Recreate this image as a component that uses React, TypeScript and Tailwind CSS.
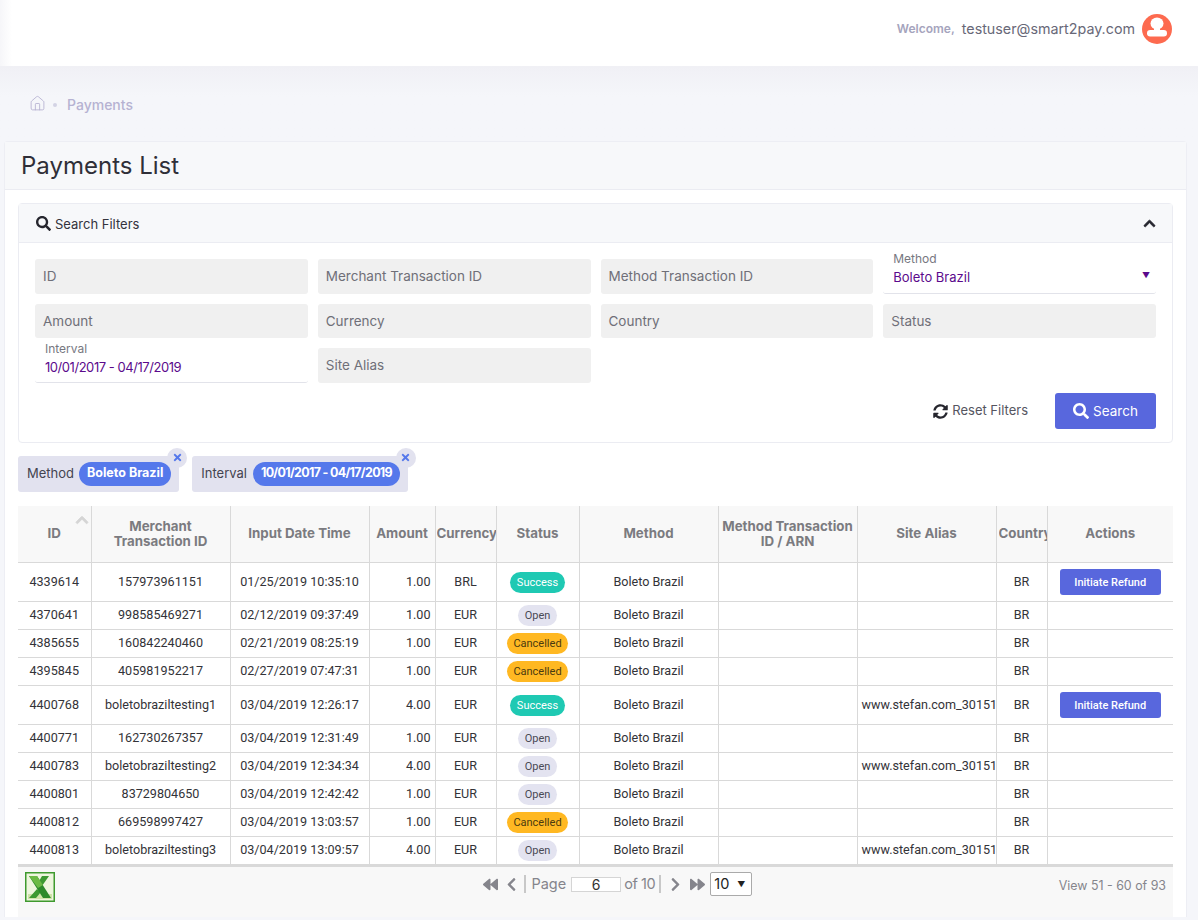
import React from "react";
import { Home } from "lucide-react";
import {
  FaBackward,
  FaChevronLeft,
  FaChevronRight,
  FaChevronUp,
  FaForward,
  FaSearch,
  FaSyncAlt,
  FaTimes,
} from "react-icons/fa";

type Status = "Success" | "Open" | "Cancelled";

interface Payment {
  id: string;
  merchantId: string;
  date: string;
  amount: string;
  currency: string;
  status: Status;
  alias?: boolean;
}

const payments: Payment[] = [
  { id: "4339614", merchantId: "157973961151", date: "01/25/2019 10:35:10", amount: "1.00", currency: "BRL", status: "Success" },
  { id: "4370641", merchantId: "998585469271", date: "02/12/2019 09:37:49", amount: "1.00", currency: "EUR", status: "Open" },
  { id: "4385655", merchantId: "160842240460", date: "02/21/2019 08:25:19", amount: "1.00", currency: "EUR", status: "Cancelled" },
  { id: "4395845", merchantId: "405981952217", date: "02/27/2019 07:47:31", amount: "1.00", currency: "EUR", status: "Cancelled" },
  { id: "4400768", merchantId: "boletobraziltesting1", date: "03/04/2019 12:26:17", amount: "4.00", currency: "EUR", status: "Success", alias: true },
  { id: "4400771", merchantId: "162730267357", date: "03/04/2019 12:31:49", amount: "1.00", currency: "EUR", status: "Open" },
  { id: "4400783", merchantId: "boletobraziltesting2", date: "03/04/2019 12:34:34", amount: "4.00", currency: "EUR", status: "Open", alias: true },
  { id: "4400801", merchantId: "83729804650", date: "03/04/2019 12:42:42", amount: "1.00", currency: "EUR", status: "Open" },
  { id: "4400812", merchantId: "669598997427", date: "03/04/2019 13:03:57", amount: "1.00", currency: "EUR", status: "Cancelled" },
  { id: "4400813", merchantId: "boletobraziltesting3", date: "03/04/2019 13:09:57", amount: "4.00", currency: "EUR", status: "Open", alias: true },
];

const columns = [
  { label: "ID", width: "w-[73px]", extra: "px-[1px]" },
  { label: "Merchant Transaction ID", width: "w-[139px]", extra: "px-[12px]" },
  { label: "Input Date Time", width: "w-[139px]", extra: "px-[1px]" },
  { label: "Amount", width: "w-[66px]", extra: "px-[1px]" },
  { label: "Currency", width: "w-[61px]", extra: "pl-[1px]" },
  { label: "Status", width: "w-[83px]", extra: "px-[1px]" },
  { label: "Method", width: "w-[139px]", extra: "px-[1px]" },
  { label: "Method Transaction ID / ARN", width: "w-[139px]", extra: "px-[1px]" },
  { label: "Site Alias", width: "w-[139px]", extra: "px-[1px]" },
  { label: "Country", width: "w-[51px]", extra: "pl-[2px]" },
  { label: "Actions", width: "w-[126px]", extra: "px-[1px]" },
];

const statusClass: Record<Status, string> = {
  Success: "bg-[#1fc9b3] text-white px-[7px]",
  Open: "bg-[#e3e3f0] text-[#4a4a55] px-[7px]",
  Cancelled: "bg-[#ffb822] text-[#4a3a10] px-[6px]",
};

const FilterField = ({ label }: { label: string }) => (
  <div className="h-[34.5px] rounded-[3px] bg-[#f0f0f0] px-[8px] text-[13.5px] leading-[34.5px] text-[#6f6f78]">
    {label}
  </div>
);

const FilledField = ({ label, value, arrow, tight }: { label: string; value: string; arrow?: boolean; tight?: boolean }) => (
  <div className="relative -mt-[10px] h-[44.5px] rounded-[3px] border-b border-[#e2e3ea] px-[10px]">
    <div className={`text-[12px] leading-[16px] text-[#77777f] ${tight ? "pt-[3px]" : "pt-[2px]"}`}>{label}</div>
    <div className={`text-[13px] leading-[20px] text-[#5b0a8c] ${tight ? "tracking-[-0.45px]" : ""}`}>{value}</div>
    {arrow && <span className="absolute right-[6px] top-[20px] text-[8px] leading-[12px] text-[#5b0a8c]">▼</span>}
  </div>
);

const Chip = ({ label, value, tight }: { label: string; value: string; tight?: boolean }) => (
  <div className={`relative flex h-[36px] items-center rounded-[3px] bg-[#e2e2ef] pl-[9px] pr-[8px] text-[13px] text-[#444450] ${tight ? "gap-[6px]" : "gap-[5px]"}`}>
    <span>{label}</span>
    <span className={`flex h-[24px] items-center rounded-full bg-[#5578eb] px-[8px] text-[12.5px] font-bold text-white ${tight ? "tracking-[-0.7px]" : ""}`}>{value}</span>
    <span className="absolute -right-[8px] -top-[8px] flex h-[20px] w-[20px] items-center justify-center rounded-full bg-[#e2e2ef] text-[#5578eb]">
      <FaTimes size={11} />
    </span>
  </div>
);

const ExcelIcon = () => (
  <svg width="30" height="30" viewBox="0 0 30 30">
    <rect x="0.75" y="0.75" width="28.5" height="28.5" fill="#eef6de" stroke="#3f9a2f" strokeWidth="1.5" />
    <rect x="3" y="22" width="24" height="5" fill="#cfe3a8" />
    <path d="M17 4h7l-7 10-4-3zM12 17l4 3-5 6H4z" fill="#3d9a32" />
    <path d="M4 4h8l14 22h-8z" fill="#2c8a2a" />
    <path d="M4 4h8l6 9-5 3z" fill="#6cba45" />
  </svg>
);

const UserAvatar = () => (
  <svg width="30" height="30" viewBox="0 0 30 30">
    <circle cx="15" cy="15" r="15" fill="#fd6a4f" />
    <ellipse cx="15" cy="9.5" rx="6.5" ry="6" fill="#fff" />
    <rect x="5" y="16" width="20" height="6.5" rx="3.2" fill="#fff" />
    <rect x="12" y="14" width="6" height="3" fill="#fff" />
  </svg>
);

export default function App() {
  return (
    <div className="min-h-[920px] bg-[#f5f6fa] font-['Inter','Liberation_Sans',sans-serif]">
      <header className="flex h-[66px] items-center justify-end bg-linear-to-r from-[#f6f6f9] to-white to-[1%] pb-[8px] pr-[26px]">
        <span className="text-[12px] font-semibold text-[#a5a4bd]">Welcome,</span>
        <span className="ml-[7px] text-[14.3px] text-[#686878]">testuser@smart2pay.com</span>
        <span className="ml-[7px]">
          <UserAvatar />
        </span>
      </header>

      <div className="h-[75px] bg-gradient-to-b from-[#f0f0f5] to-[#f5f6fa] to-40% pl-[29px] pt-[28px]">
        <div className="flex items-center text-[14px] font-medium text-[#b6b2d2]">
          <Home size={17} strokeWidth={1.25} className="-mt-[3px]" />
          <span className="ml-[7px] h-[4px] w-[4px] rounded-full bg-[#d3d3e4]" />
          <span className="ml-[10px]">Payments</span>
        </div>
      </div>

      <main className="ml-[4px] mr-[11px] rounded-t-[4px] border border-b-0 border-[#edeef4] bg-white">
        <div className="flex h-[48px] items-center border-b border-[#ebecf2] bg-[#f7f8fa] pl-[16px] text-[24px] text-[#2f2f38]">
          Payments List
        </div>

        <div className="px-[13px] pt-[13px]">
          <section className="rounded-[4px] border border-[#ebecf2]">
            <div className="flex h-[39px] items-center justify-between border-b border-[#ebecf2] bg-[#f7f8fa] pl-[17px] pr-[16px] text-[13px] text-[#33333d]">
              <span className="flex items-center gap-[4px] pt-[3px]">
                <FaSearch size={15} className="-mt-[2px] text-[#26262e]" /> Search Filters
              </span>
              <FaChevronUp size={13} className="text-[#26262e]" stroke="currentColor" strokeWidth={30} />
            </div>
            <div className="px-[16px] pt-[16px]">
              <div className="grid grid-cols-4 gap-x-[10px] gap-y-[10px]">
                <FilterField label="ID" />
                <FilterField label="Merchant Transaction ID" />
                <FilterField label="Method Transaction ID" />
                <FilledField label="Method" value="Boleto Brazil" arrow />
                <FilterField label="Amount" />
                <FilterField label="Currency" />
                <FilterField label="Country" />
                <FilterField label="Status" />
                <FilledField label="Interval" value="10/01/2017 - 04/17/2019" tight />
                <FilterField label="Site Alias" />
              </div>
              <div className="flex items-center justify-end pb-[13px] pt-[10px]">
                <span className="flex items-center gap-[4px] pt-[1px] text-[13px] text-[#55555f]">
                  <FaSyncAlt size={15} className="text-[#26262e]" /> Reset Filters
                </span>
                <button className="ml-[27px] flex h-[36px] w-[101px] items-center justify-center gap-[4px] rounded-[3px] bg-[#5867dd] pt-[1px] text-[13.5px] text-white">
                  <FaSearch size={16} /> Search
                </button>
              </div>
            </div>
          </section>

          <div className="mt-[13px] flex gap-[13px]">
            <Chip label="Method" value="Boleto Brazil" />
            <Chip label="Interval" value="10/01/2017 - 04/17/2019" tight />
          </div>

          <table className="mt-[14px] w-full table-fixed border-collapse font-['Roboto',sans-serif] text-[12.6px] text-[#333338]">
            <colgroup>
              {columns.map((c) => (
                <col key={c.label} className={c.width} />
              ))}
            </colgroup>
            <thead>
              <tr className="h-[57px] border-b border-[#d9d9d9] bg-[#f8f8f8]">
                {columns.map((c, i) => (
                  <th
                    key={c.label}
                    className={`relative overflow-hidden border-[#d9d9d9] text-center font-['Inter',sans-serif] text-[13.3px] font-bold leading-[15px] text-[#7b7b80] ${c.extra} ${i < columns.length - 1 ? "border-r" : ""}`}
                  >
                    {c.label === "Currency" || c.label === "Country" ? <span className="block overflow-hidden whitespace-nowrap text-left">{c.label}</span> : c.label}
                    {i === 0 && <FaChevronUp size={14} className="absolute right-[2px] top-[7px] text-[#d5d5d5]" stroke="currentColor" strokeWidth={30} />}
                  </th>
                ))}
              </tr>
            </thead>
            <tbody>
              {payments.map((p) => {
                const canRefund = p.status === "Success";
                return (
                  <tr key={p.id} className={`border-b border-[#d9d9d9] ${canRefund ? "h-[39px]" : "h-[28px]"}`}>
                    <td className="border-r border-[#d9d9d9] text-center">{p.id}</td>
                    <td className="border-r border-[#d9d9d9] text-center">{p.merchantId}</td>
                    <td className="border-r border-[#d9d9d9] text-center">{p.date}</td>
                    <td className="border-r border-[#d9d9d9] pr-[4px] text-right">{p.amount}</td>
                    <td className="border-r border-[#d9d9d9] text-center">{p.currency}</td>
                    <td className="border-r border-[#d9d9d9] text-center">
                      <span className={`inline-block rounded-full text-[11px] leading-[21px] ${statusClass[p.status]}`}>{p.status}</span>
                    </td>
                    <td className="border-r border-[#d9d9d9] text-center">Boleto Brazil</td>
                    <td className="border-r border-[#d9d9d9]" />
                    <td className="overflow-hidden whitespace-nowrap border-r border-[#d9d9d9] pl-[4px]">{p.alias ? "www.stefan.com_30151" : ""}</td>
                    <td className="border-r border-[#d9d9d9] text-center">BR</td>
                    <td className="text-center">
                      {canRefund && (
                        <button className="h-[26px] w-[101px] rounded-[3px] bg-[#5867dd] pt-[2px] text-[11px] font-medium text-white">Initiate Refund</button>
                      )}
                    </td>
                  </tr>
                );
              })}
            </tbody>
          </table>

          <div className="flex h-[52px] items-start justify-between border-t-2 border-[#d9d9d9] bg-[#f8f8f8] pl-[7px] pr-[7px] pt-[5px] text-[#85858c]">
            <ExcelIcon />
            <div className="ml-[122px] flex items-center text-[14.5px]">
              <FaBackward size={15} />
              <FaChevronLeft size={15} className="ml-[6px]" />
              <span className="ml-[5px] h-[18px] border-l-2 border-[#c8c8c8]" />
              <span className="ml-[5px]">Page</span>
              <input readOnly value="6" className="ml-[5px] h-[15px] w-[50px] border border-[#d5d5d5] bg-white text-center text-[14px] text-[#333]" />
              <span className="ml-[3px] tracking-[-0.4px]">of 10</span>
              <span className="ml-[4px] h-[18px] border-l-2 border-[#c8c8c8]" />
              <FaChevronRight size={15} className="ml-[7px]" />
              <FaForward size={15} className="ml-[7px]" />
              <span className="ml-[5px] flex h-[24px] w-[42px] items-center justify-between rounded-[2px] border border-[#aaa] bg-white px-[3px] pr-[6px] text-[#222]">
                10 <span className="text-[8px]">▼</span>
              </span>
            </div>
            <span className="pt-[5px] text-[12.4px] text-[#85858c]">View 51 - 60 of 93</span>
          </div>
        </div>
      </main>
    </div>
  );
}
